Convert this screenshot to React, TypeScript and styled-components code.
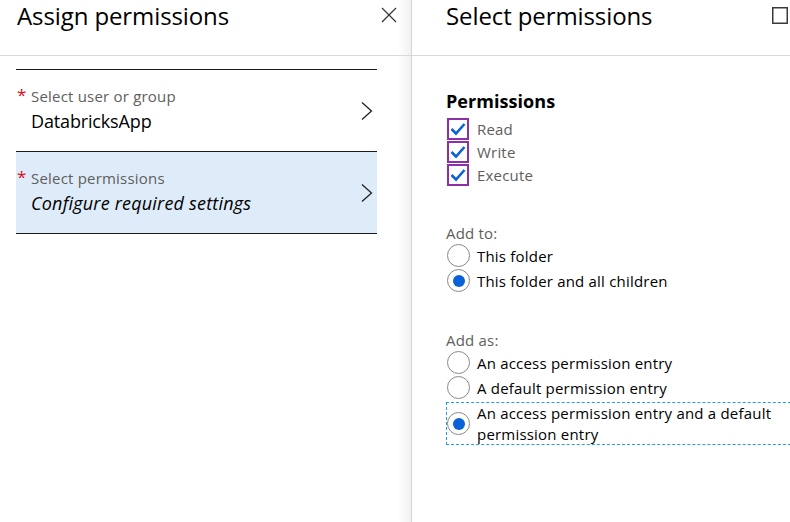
import React from 'react';
import styled, { createGlobalStyle } from 'styled-components';

const Global = createGlobalStyle`
  html, body { margin: 0; padding: 0; background: #fff; }
  body { font-family: "Open Sans", "Noto Sans", sans-serif; color: #000; }
  * { box-sizing: border-box; }
`;

const Shell = styled.div`
  display: flex;
  width: 790px;
  height: 522px;
  overflow: hidden;
  background: #fff;
`;

const LeftPanel = styled.section`
  width: 412px;
  flex: none;
  display: flex;
  flex-direction: column;
  border-right: 1px solid #d4d4d4;
  background: linear-gradient(to right, #fff 398px, #f1f1f1 411px);
`;

const RightPanel = styled.section`
  flex: 1;
  min-width: 0;
  display: flex;
  flex-direction: column;
`;

const Header = styled.header<{ $padLeft: number; $padRight: number }>`
  height: 56px;
  flex: none;
  display: flex;
  justify-content: space-between;
  align-items: flex-start;
  padding: 0 ${p => p.$padRight}px 0 ${p => p.$padLeft}px;
  border-bottom: 1px solid #d9d9d9;
`;

const Title = styled.h1`
  margin: 0;
  font-size: 24px;
  line-height: 32px;
  font-weight: 400;
  letter-spacing: -0.1px;
`;

const IconButton = styled.button`
  border: 0;
  background: none;
  padding: 0;
  margin-top: 7px;
  display: flex;
  color: #333;
`;

const List = styled.div`
  margin: 13px 34px 0 16px;
  border-bottom: 1px solid #1b1b1b;
`;

const Item = styled.div<{ $active?: boolean }>`
  height: 82px;
  border-top: 1px solid #1b1b1b;
  background: ${p => (p.$active ? '#deecf9' : 'transparent')};
  display: flex;
  align-items: center;
  padding: 0 4px 0 1px;
`;

const ItemBody = styled.div`
  flex: 1;
  align-self: stretch;
  display: flex;
  padding-top: 16px;
`;

const Required = styled.span`
  width: 14px;
  flex: none;
  color: #e00b1c;
  font-size: 17px;
  line-height: 17px;
  height: 14px;
`;

const Texts = styled.div`
  display: flex;
  flex-direction: column;
  gap: 3px;
`;

const ItemLabel = styled.div`
  font-size: 15px;
  line-height: 20px;
  color: #605e5c;
  letter-spacing: 0.2px;
`;

const ItemValue = styled.div<{ $italic?: boolean }>`
  font-size: 18px;
  line-height: 24px;
  color: #000;
  font-style: ${p => (p.$italic ? 'italic' : 'normal')};
  letter-spacing: ${p => (p.$italic ? '0.2px' : '-0.15px')};
`;

const Content = styled.div`
  padding: 33px 0 0 34px;
  display: flex;
  flex-direction: column;
`;

const SectionTitle = styled.h2`
  margin: 0 0 4px;
  font-size: 18px;
  line-height: 24px;
  font-weight: 700;
  letter-spacing: 0.05px;
`;

const GroupLabel = styled.div`
  margin-top: 37px;
  font-size: 15px;
  line-height: 20px;
  color: #605e5c;
  letter-spacing: 0.2px;
`;

const CheckRow = styled.label`
  display: flex;
  align-items: center;
  height: 23px;
  gap: 8px;
  font-size: 15px;
  color: #605e5c;
  letter-spacing: 0.2px;
`;

const CheckBox = styled.span`
  width: 22px;
  height: 22px;
  border: 2px solid #8c2fa8;
  display: flex;
  align-items: center;
  justify-content: center;
  margin-left: 1px;
`;

const RadioRow = styled.label`
  display: flex;
  align-items: center;
  height: 25px;
  gap: 7px;
  font-size: 15px;
  line-height: 20px;
  color: #000;
  letter-spacing: 0.2px;
`;

const FocusRow = styled.label`
  display: flex;
  align-items: center;
  gap: 7px;
  width: 360px;
  height: 43px;
  margin-top: 2px;
  border: 1px dashed #23a1de;
  border-right: none;
  font-size: 15px;
  line-height: 21px;
  color: #000;
  letter-spacing: 0.2px;
`;

const FocusText = styled.span`
  width: 310px;
  margin-top: 1px;
`;

const RadioCircle = styled.span<{ $checked?: boolean }>`
  width: 23px;
  height: 23px;
  flex: none;
  border-radius: 50%;
  border: 1px solid #8a8886;
  background: #fff;
  display: flex;
  align-items: center;
  justify-content: center;
  margin-left: 1px;
  &::after {
    content: '';
    width: 12px;
    height: 12px;
    border-radius: 50%;
    background: ${p => (p.$checked ? '#0a62d6' : 'transparent')};
  }
`;

const FocusRadio = styled(RadioCircle)`
  margin-left: 0;
`;

const Chevron = () => (
  <svg width="12" height="20" viewBox="0 0 12 20">
    <polyline points="1,1.5 10.5,10 1,18.5" fill="none" stroke="#222" strokeWidth="1.3" />
  </svg>
);

const CloseIcon = () => (
  <svg width="16" height="16" viewBox="0 0 16 16">
    <path d="M1 1 L15 15 M15 1 L1 15" stroke="#333" strokeWidth="1.2" fill="none" />
  </svg>
);

const MaxIcon = () => (
  <svg width="16" height="17" viewBox="0 0 16 17">
    <rect x="0.75" y="0.75" width="14.5" height="15.5" fill="none" stroke="#3a3a3a" strokeWidth="1.5" />
  </svg>
);

const Check = () => (
  <svg width="16" height="14" viewBox="0 0 16 14">
    <polyline points="1.5,7 6,11.5 14.5,2" fill="none" stroke="#0a62d6" strokeWidth="2.6" />
  </svg>
);

export default function App() {
  return (
    <>
      <Global />
      <Shell>
        <LeftPanel>
          <Header $padLeft={17} $padRight={14}>
            <Title>Assign permissions</Title>
            <IconButton aria-label="Close"><CloseIcon /></IconButton>
          </Header>
          <List>
            <Item>
              <ItemBody>
                <Required>*</Required>
                <Texts>
                  <ItemLabel>Select user or group</ItemLabel>
                  <ItemValue>DatabricksApp</ItemValue>
                </Texts>
              </ItemBody>
              <Chevron />
            </Item>
            <Item $active>
              <ItemBody>
                <Required>*</Required>
                <Texts>
                  <ItemLabel>Select permissions</ItemLabel>
                  <ItemValue $italic>Configure required settings</ItemValue>
                </Texts>
              </ItemBody>
              <Chevron />
            </Item>
          </List>
        </LeftPanel>
        <RightPanel>
          <Header $padLeft={34} $padRight={2}>
            <Title>Select permissions</Title>
            <IconButton aria-label="Maximize"><MaxIcon /></IconButton>
          </Header>
          <Content>
            <SectionTitle>Permissions</SectionTitle>
            {['Read', 'Write', 'Execute'].map(p => (
              <CheckRow key={p}>
                <CheckBox><Check /></CheckBox>
                {p}
              </CheckRow>
            ))}
            <GroupLabel>Add to:</GroupLabel>
            <RadioRow><RadioCircle />This folder</RadioRow>
            <RadioRow><RadioCircle $checked />This folder and all children</RadioRow>
            <GroupLabel>Add as:</GroupLabel>
            <RadioRow><RadioCircle />An access permission entry</RadioRow>
            <RadioRow><RadioCircle />A default permission entry</RadioRow>
            <FocusRow>
              <FocusRadio $checked />
              <FocusText>An access permission entry and a default permission entry</FocusText>
            </FocusRow>
          </Content>
        </RightPanel>
      </Shell>
    </>
  );
}
